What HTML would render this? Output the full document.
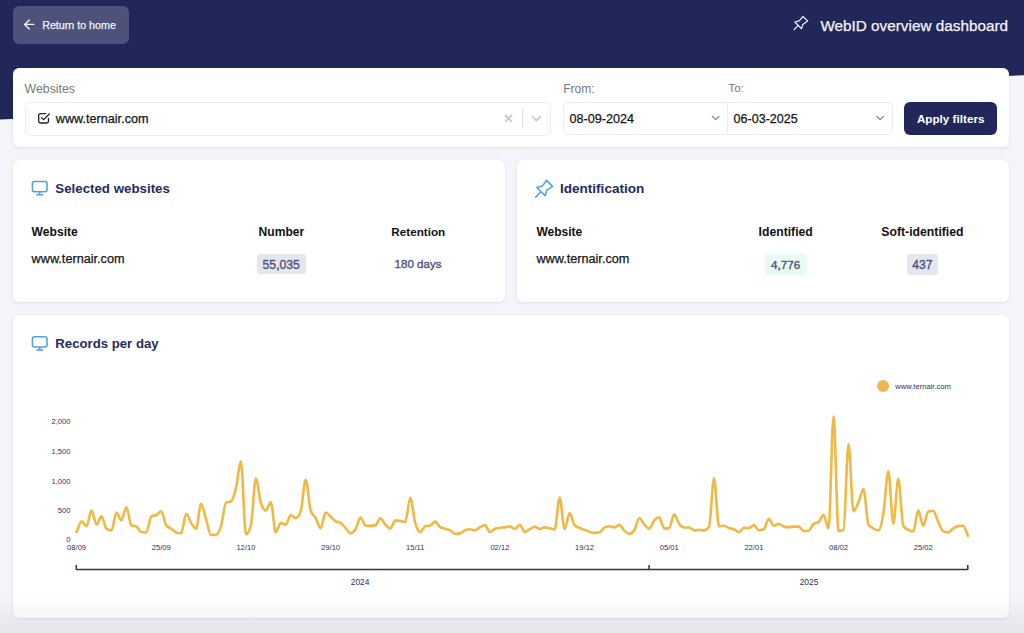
<!DOCTYPE html>
<html><head><meta charset="utf-8">
<style>
*{box-sizing:border-box;margin:0;padding:0}
html,body{width:1024px;height:633px;overflow:hidden}
body{background:#f4f5fa;font-family:"Liberation Sans",sans-serif;position:relative;color:#111}
.abs{position:absolute}
.t{position:absolute;line-height:1;white-space:nowrap}
#hdr{position:absolute;left:0;top:0;width:1024px;height:130px}
.card{position:absolute;background:#fff;border-radius:6px;box-shadow:0 1px 3px rgba(30,35,80,0.09),0 0 1px rgba(30,35,80,0.06)}
.med{-webkit-text-stroke:0.25px currentColor}
.med2{-webkit-text-stroke:0.4px currentColor}
.axis{font-size:7.6px;fill:#2d3160;font-family:"Liberation Sans",sans-serif}
#fade{position:absolute;left:0;top:596px;width:1024px;height:37px;background:linear-gradient(rgba(40,45,70,0),rgba(40,45,70,0.075))}
</style></head>
<body>
<svg id="hdr" width="1024" height="130" viewBox="0 0 1024 130"><path d="M0 0H1024V75.2L0 119.6Z" fill="#222759"/></svg>

<div class="abs" style="left:13px;top:6px;width:116px;height:38px;border-radius:6px;background:#4e527a"></div>
<svg class="abs" style="left:0;top:0" width="40" height="40" viewBox="0 0 40 40"><path d="M33.8 24.4H24.6M29.3 20.1L24.6 24.4L29.3 29.1" stroke="#f1f2f6" stroke-width="1.4" fill="none" stroke-linecap="round" stroke-linejoin="round"/></svg>
<div class="t med" style="left:42.2px;top:19.9px;font-size:10.7px;color:#f1f2f6">Return to home</div>

<svg class="abs" style="left:780px;top:0" width="40" height="40" viewBox="780 0 40 40"><path d="M803 16.5L807.7 20.9L802.8 24.5L801.6 28.7L794.8 22L799.2 20.9Z M798 25.6L794.1 29.5" stroke="#eceef4" stroke-width="1.2" fill="none" stroke-linejoin="round" stroke-linecap="round"/></svg>
<div class="t med" style="left:820.4px;top:17.5px;font-size:15.3px;color:#f3f4f8">WebID overview dashboard</div>

<!-- filter card -->
<div class="card" style="left:13px;top:68px;width:996px;height:79px"></div>
<div class="t" style="left:24.6px;top:83.1px;font-size:12.3px;color:#777">Websites</div>
<div class="abs" style="left:25px;top:101.5px;width:526px;height:34px;border:1px solid #ececf1;border-radius:6px"></div>
<svg class="abs" style="left:0;top:100px" width="60" height="30" viewBox="0 100 60 30"><path d="M41.5 117.6L43.6 119.6L49.3 114" stroke="#222" stroke-width="1.3" fill="none" stroke-linecap="round" stroke-linejoin="round"/><path d="M48.5 118.3V121.3A1.7 1.7 0 0 1 46.8 123H40.4A1.7 1.7 0 0 1 38.7 121.3V115.3A1.7 1.7 0 0 1 40.4 113.6H45.6" stroke="#222" stroke-width="1.3" fill="none" stroke-linecap="round" stroke-linejoin="round"/></svg>
<div class="t med" style="left:55.8px;top:113.1px;font-size:12.65px;color:#151515">www.ternair.com</div>
<svg class="abs" style="left:495px;top:105px" width="60" height="30" viewBox="495 105 60 30"><path d="M505.5 115.5L511.4 121.4M511.4 115.5L505.5 121.4" stroke="#c9c9c9" stroke-width="1.8" stroke-linecap="round"/><path d="M522.5 108.5V128.4" stroke="#dedede" stroke-width="1"/><path d="M532.6 116.6L536.4 120.6L540.2 116.6" stroke="#cacaca" stroke-width="1.7" fill="none" stroke-linecap="round" stroke-linejoin="round"/></svg>

<div class="t" style="left:563.2px;top:83.4px;font-size:12px;color:#777">From:</div>
<div class="t" style="left:728.3px;top:83.4px;font-size:11.8px;color:#777">To:</div>
<div class="abs" style="left:562.5px;top:101.5px;width:330px;height:33.5px;border:1px solid #ececf1;border-radius:6px"></div>
<div class="abs" style="left:727px;top:102px;width:1px;height:32.5px;background:#ebebf0"></div>
<div class="t med" style="left:569.4px;top:113.1px;font-size:12.65px;color:#151515">08-09-2024</div>
<div class="t med" style="left:733.6px;top:113.1px;font-size:12.55px;color:#151515">06-03-2025</div>
<svg class="abs" style="left:700px;top:105px" width="200" height="25" viewBox="700 105 200 25"><path d="M712.3 116.4L715.6 119.6L719 116.4M876.8 116.4L880.1 119.6L883.5 116.4" stroke="#777a88" stroke-width="1.15" fill="none" stroke-linecap="round" stroke-linejoin="round"/></svg>
<div class="abs" style="left:904.3px;top:101.7px;width:92.5px;height:33.3px;border-radius:6px;background:#222759"></div>
<div class="t" style="left:916.9px;top:113px;font-size:11.7px;font-weight:bold;color:#fff">Apply filters</div>

<!-- selected websites card -->
<div class="card" style="left:13px;top:160px;width:492px;height:142px"></div>
<svg class="abs" style="left:20px;top:175px" width="40" height="25" viewBox="20 175 40 25"><rect x="32.4" y="181.5" width="14.6" height="10.2" rx="2" stroke="#4fa3dc" stroke-width="1.55" fill="none"/><path d="M39.7 191.7V194.8M36.3 194.8H43" stroke="#4fa3dc" stroke-width="1.55"/></svg>
<div class="t" style="left:55.3px;top:182.1px;font-size:13.3px;font-weight:bold;color:#262a5c">Selected websites</div>
<div class="t" style="left:31.6px;top:225.6px;font-size:12.1px;font-weight:bold;color:#111">Website</div>
<div class="t" style="left:258.6px;top:225.6px;font-size:12.1px;font-weight:bold;color:#111">Number</div>
<div class="t" style="left:391.3px;top:225.6px;font-size:11.7px;font-weight:bold;color:#111">Retention</div>
<div class="t med" style="left:31.6px;top:252.6px;font-size:12.68px;color:#151515">www.ternair.com</div>
<div class="abs" style="left:257.2px;top:254.1px;width:48.8px;height:20.4px;border-radius:3px;background:#e6e7ec"></div>
<div class="t med2" style="left:262.6px;top:258.5px;font-size:12.2px;color:#52577f">55,035</div>
<div class="t med2" style="left:394.6px;top:258.5px;font-size:11.55px;color:#52577f">180 days</div>

<!-- identification card -->
<div class="card" style="left:517px;top:160px;width:492px;height:142px"></div>
<svg class="abs" style="left:525px;top:172px" width="40" height="30" viewBox="525 172 40 30"><path d="M546.4 180.4L552.6 186.4L546.6 190.4L545.2 195.8L536.8 187.5L542.3 186.1Z M540.3 192.2L535.7 197.2" stroke="#4fa3dc" stroke-width="1.55" fill="none" stroke-linejoin="round" stroke-linecap="round"/></svg>
<div class="t" style="left:559.9px;top:181.7px;font-size:13.58px;font-weight:bold;color:#262a5c">Identification</div>
<div class="t" style="left:536.4px;top:225.6px;font-size:12px;font-weight:bold;color:#111">Website</div>
<div class="t" style="left:758.6px;top:225.6px;font-size:12.2px;font-weight:bold;color:#111">Identified</div>
<div class="t" style="left:881.3px;top:225.6px;font-size:12.24px;font-weight:bold;color:#111">Soft-identified</div>
<div class="t med" style="left:536.4px;top:252.6px;font-size:12.68px;color:#151515">www.ternair.com</div>
<div class="abs" style="left:765px;top:253.7px;width:41.9px;height:21px;border-radius:3px;background:#e8fbf3"></div>
<div class="t med2" style="left:771px;top:258.5px;font-size:11.67px;color:#52577f">4,776</div>
<div class="abs" style="left:906.8px;top:253.7px;width:31.6px;height:21px;border-radius:3px;background:#e6e7ec"></div>
<div class="t med2" style="left:912.3px;top:258.5px;font-size:12px;color:#52577f">437</div>

<!-- chart card -->
<div class="card" style="left:13px;top:315px;width:996px;height:303px"></div>
<svg class="abs" style="left:20px;top:330px" width="40" height="25" viewBox="20 330 40 25"><rect x="32.4" y="336.8" width="14.6" height="10.2" rx="2" stroke="#4fa3dc" stroke-width="1.55" fill="none"/><path d="M39.7 347V350M36.3 350H43" stroke="#4fa3dc" stroke-width="1.55"/></svg>
<div class="t" style="left:55.3px;top:336.9px;font-size:13.2px;font-weight:bold;color:#262a5c">Records per day</div>

<svg class="abs" style="left:0;top:0" width="1024" height="633" viewBox="0 0 1024 633">
<text x="70.5" y="421.5" text-anchor="end" class="axis" dy="2.7">2,000</text>
<text x="70.5" y="451.2" text-anchor="end" class="axis" dy="2.7">1,500</text>
<text x="70.5" y="480.8" text-anchor="end" class="axis" dy="2.7">1,000</text>
<text x="70.5" y="510.2" text-anchor="end" class="axis" dy="2.7">500</text>
<text x="70.5" y="539.0" text-anchor="end" class="axis" dy="2.7">0</text>
<text x="76.6" y="547" text-anchor="middle" class="axis" dy="2.7">08/09</text>
<text x="161.3" y="547" text-anchor="middle" class="axis" dy="2.7">25/09</text>
<text x="245.9" y="547" text-anchor="middle" class="axis" dy="2.7">12/10</text>
<text x="330.6" y="547" text-anchor="middle" class="axis" dy="2.7">29/10</text>
<text x="415.2" y="547" text-anchor="middle" class="axis" dy="2.7">15/11</text>
<text x="499.9" y="547" text-anchor="middle" class="axis" dy="2.7">02/12</text>
<text x="584.6" y="547" text-anchor="middle" class="axis" dy="2.7">19/12</text>
<text x="669.2" y="547" text-anchor="middle" class="axis" dy="2.7">05/01</text>
<text x="753.9" y="547" text-anchor="middle" class="axis" dy="2.7">22/01</text>
<text x="838.5" y="547" text-anchor="middle" class="axis" dy="2.7">08/02</text>
<text x="923.2" y="547" text-anchor="middle" class="axis" dy="2.7">25/02</text>
<path d="M76.60,532.00C78.26,528.43 79.92,521.30 81.58,521.30C83.24,521.30 84.90,526.20 86.56,526.20C88.22,526.20 89.88,510.50 91.54,510.50C93.20,510.50 94.86,524.60 96.52,524.60C98.18,524.60 99.84,516.30 101.50,516.30C103.16,516.30 104.82,527.57 106.48,528.70C108.14,529.83 109.80,530.40 111.46,530.40C113.12,530.40 114.78,512.60 116.44,512.60C118.10,512.60 119.76,520.40 121.42,520.40C123.08,520.40 124.74,507.20 126.40,507.20C128.06,507.20 129.72,524.60 131.38,525.40C133.04,526.20 134.70,525.80 136.36,526.60C138.02,527.40 139.68,531.73 141.34,532.00C143.00,532.27 144.66,532.40 146.32,532.40C147.98,532.40 149.64,517.17 151.30,516.30C152.96,515.43 154.62,515.83 156.28,515.00C157.94,514.17 159.60,511.30 161.26,511.30C162.92,511.30 164.58,523.20 166.24,525.40C167.90,527.60 169.56,527.52 171.22,528.70C172.88,529.88 174.54,532.03 176.20,532.50C177.86,532.97 179.52,533.20 181.18,533.20C182.84,533.20 184.50,513.80 186.16,513.80C187.82,513.80 189.48,520.42 191.14,522.90C192.80,525.38 194.46,528.70 196.12,528.70C197.78,528.70 199.44,503.80 201.10,503.80C202.76,503.80 204.42,514.42 206.08,519.60C207.74,524.78 209.40,534.90 211.06,534.90C212.72,534.90 214.38,534.90 216.04,534.90C217.70,534.90 219.36,531.57 221.02,526.20C222.68,520.83 224.34,503.57 226.00,502.70C227.66,501.83 229.32,502.27 230.98,501.40C232.64,500.53 234.30,494.73 235.96,488.10C237.62,481.47 239.28,461.60 240.94,461.60C242.60,461.60 244.26,534.20 245.92,534.20C247.58,534.20 249.24,531.27 250.90,525.40C252.56,519.53 254.22,478.50 255.88,478.50C257.54,478.50 259.20,498.00 260.86,503.00C262.52,508.00 264.18,510.50 265.84,510.50C267.50,510.50 269.16,502.20 270.82,502.20C272.48,502.20 274.14,532.50 275.80,532.50C277.46,532.50 279.12,522.90 280.78,522.90C282.44,522.90 284.10,524.60 285.76,524.60C287.42,524.60 289.08,515.00 290.74,515.00C292.40,515.00 294.06,518.00 295.72,518.00C297.38,518.00 299.04,515.77 300.70,511.30C302.36,506.83 304.02,479.80 305.68,479.80C307.34,479.80 309.00,505.50 310.66,510.50C312.32,515.50 313.98,515.05 315.64,518.00C317.30,520.95 318.96,528.20 320.62,528.20C322.28,528.20 323.94,512.60 325.60,512.60C327.26,512.60 328.92,515.15 330.58,516.60C332.24,518.05 333.90,520.25 335.56,521.30C337.22,522.35 338.88,521.83 340.54,522.90C342.20,523.97 343.86,526.18 345.52,527.90C347.18,529.62 348.84,533.20 350.50,533.20C352.16,533.20 353.82,531.97 355.48,529.50C357.14,527.03 358.80,517.60 360.46,517.60C362.12,517.60 363.78,525.07 365.44,525.40C367.10,525.73 368.76,525.90 370.42,525.90C372.08,525.90 373.74,525.73 375.40,525.40C377.06,525.07 378.72,518.30 380.38,518.30C382.04,518.30 383.70,522.92 385.36,524.60C387.02,526.28 388.68,528.40 390.34,528.40C392.00,528.40 393.66,520.40 395.32,520.40C396.98,520.40 398.64,520.62 400.30,520.90C401.96,521.18 403.62,522.10 405.28,522.10C406.94,522.10 408.60,497.70 410.26,497.70C411.92,497.70 413.58,517.18 415.24,522.90C416.90,528.62 418.56,532.00 420.22,532.00C421.88,532.00 423.54,526.73 425.20,526.20C426.86,525.67 428.52,525.93 430.18,525.40C431.84,524.87 433.50,521.60 435.16,521.60C436.82,521.60 438.48,526.03 440.14,527.10C441.80,528.17 443.46,528.18 445.12,528.70C446.78,529.22 448.44,529.33 450.10,530.20C451.76,531.07 453.42,533.90 455.08,533.90C456.74,533.90 458.40,533.73 460.06,533.40C461.72,533.07 463.38,530.87 465.04,530.20C466.70,529.53 468.36,529.20 470.02,529.20C471.68,529.20 473.34,530.20 475.00,530.20C476.66,530.20 478.32,528.05 479.98,527.20C481.64,526.35 483.30,525.10 484.96,525.10C486.62,525.10 488.28,532.10 489.94,532.10C491.60,532.10 493.26,529.37 494.92,528.70C496.58,528.03 498.24,527.90 499.90,527.70C501.56,527.50 503.22,527.60 504.88,527.40C506.54,527.20 508.20,526.40 509.86,526.40C511.52,526.40 513.18,529.00 514.84,529.00C516.50,529.00 518.16,524.80 519.82,524.80C521.48,524.80 523.14,531.90 524.80,531.90C526.46,531.90 528.12,530.07 529.78,529.20C531.44,528.33 533.10,526.70 534.76,526.70C536.42,526.70 538.08,529.00 539.74,529.00C541.40,529.00 543.06,527.40 544.72,527.40C546.38,527.40 548.04,527.95 549.70,528.30C551.36,528.65 553.02,529.50 554.68,529.50C556.34,529.50 558.00,497.50 559.66,497.50C561.32,497.50 562.98,529.10 564.64,529.10C566.30,529.10 567.96,513.10 569.62,513.10C571.28,513.10 572.94,523.33 574.60,525.20C576.26,527.07 577.92,527.23 579.58,528.00C581.24,528.77 582.90,529.17 584.56,529.80C586.22,530.43 587.88,531.28 589.54,531.80C591.20,532.32 592.86,532.90 594.52,532.90C596.18,532.90 597.84,532.67 599.50,532.20C601.16,531.73 602.82,528.70 604.48,527.70C606.14,526.70 607.80,526.20 609.46,526.20C611.12,526.20 612.78,527.40 614.44,527.40C616.10,527.40 617.76,524.70 619.42,524.70C621.08,524.70 622.74,529.27 624.40,530.80C626.06,532.33 627.72,533.90 629.38,533.90C631.04,533.90 632.70,532.60 634.36,530.00C636.02,527.40 637.68,518.00 639.34,518.00C641.00,518.00 642.66,522.73 644.32,524.50C645.98,526.27 647.64,528.60 649.30,528.60C650.96,528.60 652.62,522.30 654.28,520.40C655.94,518.50 657.60,517.20 659.26,517.20C660.92,517.20 662.58,528.60 664.24,528.60C665.90,528.60 667.56,528.43 669.22,528.10C670.88,527.77 672.54,514.40 674.20,514.40C675.86,514.40 677.52,521.72 679.18,523.90C680.84,526.08 682.50,527.50 684.16,527.50C685.82,527.50 687.48,527.50 689.14,527.50C690.80,527.50 692.46,530.40 694.12,530.40C695.78,530.40 697.44,529.80 699.10,529.80C700.76,529.80 702.42,530.40 704.08,530.40C705.74,530.40 707.40,529.13 709.06,526.60C710.72,524.07 712.38,478.30 714.04,478.30C715.70,478.30 717.36,526.30 719.02,526.30C720.68,526.30 722.34,525.70 724.00,525.70C725.66,525.70 727.32,527.52 728.98,528.10C730.64,528.68 732.30,528.52 733.96,529.20C735.62,529.88 737.28,532.20 738.94,532.20C740.60,532.20 742.26,527.80 743.92,527.80C745.58,527.80 747.24,528.10 748.90,528.10C750.56,528.10 752.22,525.10 753.88,525.10C755.54,525.10 757.20,530.20 758.86,530.20C760.52,530.20 762.18,529.87 763.84,529.20C765.50,528.53 767.16,518.80 768.82,518.80C770.48,518.80 772.14,525.70 773.80,525.70C775.46,525.70 777.12,523.90 778.78,523.90C780.44,523.90 782.10,526.27 783.76,526.60C785.42,526.93 787.08,527.10 788.74,527.10C790.40,527.10 792.06,526.60 793.72,526.60C795.38,526.60 797.04,526.60 798.70,526.60C800.36,526.60 802.02,531.00 803.68,531.00C805.34,531.00 807.00,530.90 808.66,530.70C810.32,530.50 811.98,525.10 813.64,523.90C815.30,522.70 816.96,523.30 818.62,522.10C820.28,520.90 821.94,515.00 823.60,515.00C825.26,515.00 826.92,528.50 828.58,528.50C830.24,528.50 831.90,416.50 833.56,416.50C835.22,416.50 836.88,531.10 838.54,531.10C840.20,531.10 841.86,530.73 843.52,530.00C845.18,529.27 846.84,444.00 848.50,444.00C850.16,444.00 851.82,511.20 853.48,511.20C855.14,511.20 856.80,505.98 858.46,502.30C860.12,498.62 861.78,489.10 863.44,489.10C865.10,489.10 866.76,521.83 868.42,524.50C870.08,527.17 871.74,527.50 873.40,528.50C875.06,529.50 876.72,530.50 878.38,530.50C880.04,530.50 881.70,523.55 883.36,513.70C885.02,503.85 886.68,471.40 888.34,471.40C890.00,471.40 891.66,523.80 893.32,523.80C894.98,523.80 896.64,478.80 898.30,478.80C899.96,478.80 901.62,523.13 903.28,525.80C904.94,528.47 906.60,528.85 908.26,529.80C909.92,530.75 911.58,531.50 913.24,531.50C914.90,531.50 916.56,510.40 918.22,510.40C919.88,510.40 921.54,525.80 923.20,525.80C924.86,525.80 926.52,512.30 928.18,511.70C929.84,511.10 931.50,510.80 933.16,510.80C934.82,510.80 936.48,518.40 938.14,521.80C939.80,525.20 941.46,530.33 943.12,531.20C944.78,532.07 946.44,532.50 948.10,532.50C949.76,532.50 951.42,529.57 953.08,528.50C954.74,527.43 956.40,526.30 958.06,526.10C959.72,525.90 961.38,525.80 963.04,525.80C964.70,525.80 966.36,532.53 968.02,535.90" fill="none" stroke="#efb943" stroke-width="2.6" stroke-linejoin="round" stroke-linecap="round"/>
<path d="M76.3,569.5H967.8" stroke="#2d3160" stroke-width="1.5"/>
<path d="M76.3,565V570" stroke="#2d3160" stroke-width="1.5"/>
<path d="M649.1,565V570" stroke="#2d3160" stroke-width="1.5"/>
<path d="M967.8,565V570" stroke="#2d3160" stroke-width="1.5"/>
<text x="360.1" y="582" text-anchor="middle" class="axis" style="font-size:8.4px" dy="3">2024</text>
<text x="809" y="582" text-anchor="middle" class="axis" style="font-size:8.4px" dy="3">2025</text>
<circle cx="883.1" cy="385.9" r="6" fill="#ecb94e"/>
<text x="895.2" y="386.6" class="axis" dy="2.7">www.ternair.com</text>
</svg>
<div id="fade"></div>
</body></html>
